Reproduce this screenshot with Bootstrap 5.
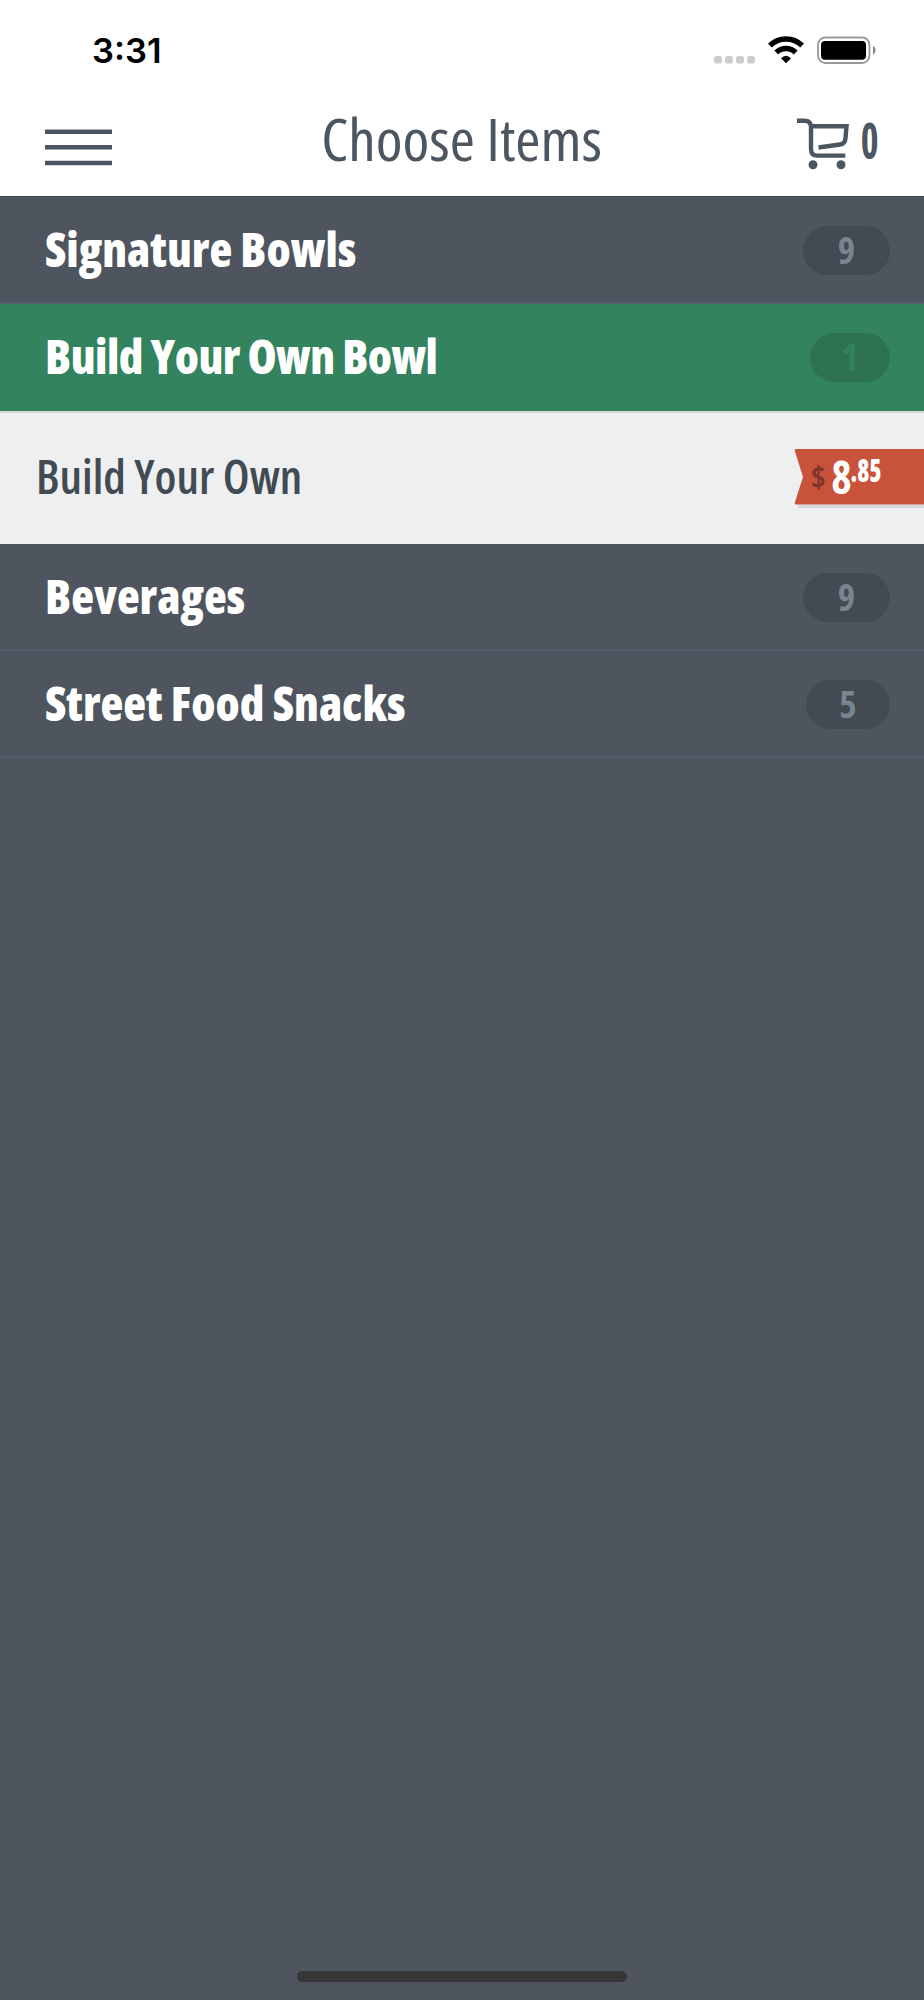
<!DOCTYPE html>
<html lang="en">

<head>
    <meta charset="UTF-8">
    <meta name="viewport" content="width=device-width, initial-scale=1.0">
    <title>Choose Items</title>
    <link href="https://cdn.jsdelivr.net/npm/bootstrap@5.3.0/dist/css/bootstrap.min.css" rel="stylesheet">
    <style>
        body {
            background: #4e555f;
            color: #4c5660;
            font-family: "Open Sans", "Noto Sans", sans-serif;
            font-stretch: 75%;
        }

        .screen {
            height: 2000px;
        }

        .status-bar {
            height: 96px;
            padding: 4px 47px 0 92px;
        }

        .clock {
            padding-top: 2px;
            font: 600 34.5px/1 Inter, sans-serif;
            color: #000;
        }

        .top-bar {
            height: 101px;
            padding: 0 45px;
            border-bottom: 1px solid #40464f;
        }

        .bar-side {
            flex: 1 1 0;
        }

        .menu-icon {
            margin-top: 33px;
        }

        .page-title {
            margin-top: 3px;
            font-size: 58px;
            line-height: 80px;
            transform: scaleX(1.05);
        }

        .cart-icon {
            margin-top: 22px;
            margin-right: 6px;
        }

        .cart-count {
            margin-top: 14px;
            margin-right: 1px;
            font-size: 50px;
            line-height: 60px;
            font-weight: 700;
            transform: scaleX(.76);
            transform-origin: right;
        }

        .category {
            height: 107px;
            padding: 0 34px 0 45px;
            border-bottom: 2px solid #575e69;
            color: #fff;
        }

        .category.open {
            background: #33835f;
            border-bottom: 0;
        }

        .category-name {
            font-size: 47px;
            font-weight: 800;
            line-height: 1;
        }

        .open .category-name {
            padding-bottom: 2px;
            letter-spacing: -.55px;
        }

        .count {
            width: 87px;
            height: 49px;
            margin-top: 2px;
            font-size: 37px;
            font-weight: 700;
            line-height: 47px;
            background: #434a52;
            color: #788591;
        }

        .count.narrow {
            width: 84px;
        }

        .open .count {
            width: 80px;
            margin-top: 0;
            background: #2d7252;
            color: #33835f;
        }

        .menu-item {
            height: 133px;
            padding: 0 0 5px 36px;
            border-top: 2px solid #d5d7d6;
            background: #eeeff1;
            color: #434b52;
        }

        .item-name {
            font-size: 46px;
            font-weight: 600;
            line-height: 1;
            transform: scaleX(1.025);
            transform-origin: left;
        }

        .price-tag {
            font-weight: 700;
        }

        .home-bar {
            width: 330px;
            height: 11px;
            margin-bottom: 18px;
            background: #363636;
        }
    </style>
</head>

<body>
    <div class="screen d-flex flex-column">
        <header class="bg-white">
            <div class="status-bar d-flex justify-content-between align-items-center">
                <div class="clock">3:31</div>
                <svg width="163" height="28" viewBox="0 0 163 28">
                    <!-- signal -->
                    <g fill="#ccc">
                        <rect x="0" y="20" width="8" height="7.500" rx="2.500" />
                        <rect x="11" y="20" width="8" height="7.500" rx="2.500" />
                        <rect x="22" y="20" width="8" height="7.500" rx="2.500" />
                        <rect x="33" y="20" width="8" height="7.500" rx="2.500" />
                    </g>
                    <!-- wifi -->
                    <path d="M55.900 9.500A23 23 0 0 1 88.100 9.500M62.300 16.500A13.700 13.700 0 0 1 81.700 16.500" fill="none" stroke="#000" stroke-width="5.400" />
                    <path d="M67 22.300Q72 17.300 77 22.300L72 27.300z" />
                    <!-- battery -->
                    <rect x="104" y="1.500" width="51.500" height="25.500" rx="7.500" fill="none" stroke="#999" stroke-width="1.800" />
                    <rect x="107" y="5" width="45" height="18.700" rx="4" />
                    <path d="M159 10c3.500 1.500 3.500 7 0 8.500z" fill="#888" />
                </svg>
            </div>
            <div class="top-bar d-flex align-items-start">
                <div class="bar-side d-flex">
                    <svg class="menu-icon" width="67" height="38" viewBox="0 0 67 38">
                        <path d="M0 2.700h67M0 18.300h67M0 34h67" stroke="#4c5660" stroke-width="4.500" />
                    </svg>
                </div>
                <h1 class="page-title mb-0 fw-normal">Choose Items</h1>
                <div class="bar-side d-flex justify-content-end">
                    <svg class="cart-icon" width="52" height="52" viewBox="0 0 52 52">
                        <g fill="none" stroke="#4c5660" stroke-width="4.400">
                            <path d="M0 2.700h7.500q6.500 0 6.500 6.500v22q0 6.400 6.400 6.400h27.900" />
                            <path d="M14 8.300h35.500l-1 12q-.5 5.700-5.500 6.200l-21.500 3" />
                        </g>
                        <circle cx="16" cy="46.700" r="4.500" fill="#4c5660" />
                        <circle cx="44" cy="46.700" r="4.500" fill="#4c5660" />
                    </svg>
                    <div class="cart-count">0</div>
                </div>
            </div>
        </header>

        <main class="flex-grow-1">
            <div class="category d-flex justify-content-between align-items-center">
                <h2 class="category-name m-0">Signature Bowls</h2>
                <span class="count rounded-pill text-center">9</span>
            </div>
            <div class="category open d-flex justify-content-between align-items-center">
                <h2 class="category-name m-0">Build Your Own Bowl</h2>
                <span class="count rounded-pill text-center">1</span>
            </div>
            <div class="menu-item d-flex justify-content-between align-items-center">
                <h3 class="item-name m-0">Build Your Own</h3>
                <svg class="price-tag" width="130" height="64" viewBox="0 0 130 64">
                    <path d="M4 61h126v3H4z" fill="#d9dadb" />
                    <path d="M130 5H2.500Q0 5 1 7.500L9 33 1 58Q0 60.500 2.500 60.500H130z" fill="#c9523a" />
                    <text x="17" y="44" font-size="31" fill="#80352a">$</text>
                    <text x="37.500" y="50" font-size="47" textLength="20" lengthAdjust="spacingAndGlyphs" fill="#fff">8</text>
                    <text x="56.500" y="37.500" font-size="31" font-weight="800" textLength="31" lengthAdjust="spacingAndGlyphs" fill="#fff">.85</text>
                </svg>
            </div>
            <div class="category d-flex justify-content-between align-items-center">
                <h2 class="category-name m-0">Beverages</h2>
                <span class="count rounded-pill text-center">9</span>
            </div>
            <div class="category d-flex justify-content-between align-items-center">
                <h2 class="category-name m-0">Street Food Snacks</h2>
                <span class="count narrow rounded-pill text-center">5</span>
            </div>
        </main>

        <div class="home-bar rounded-pill mx-auto"></div>
    </div>
    <script src="https://cdn.jsdelivr.net/npm/bootstrap@5.3.0/dist/js/bootstrap.bundle.min.js"></script>
</body>

</html>
